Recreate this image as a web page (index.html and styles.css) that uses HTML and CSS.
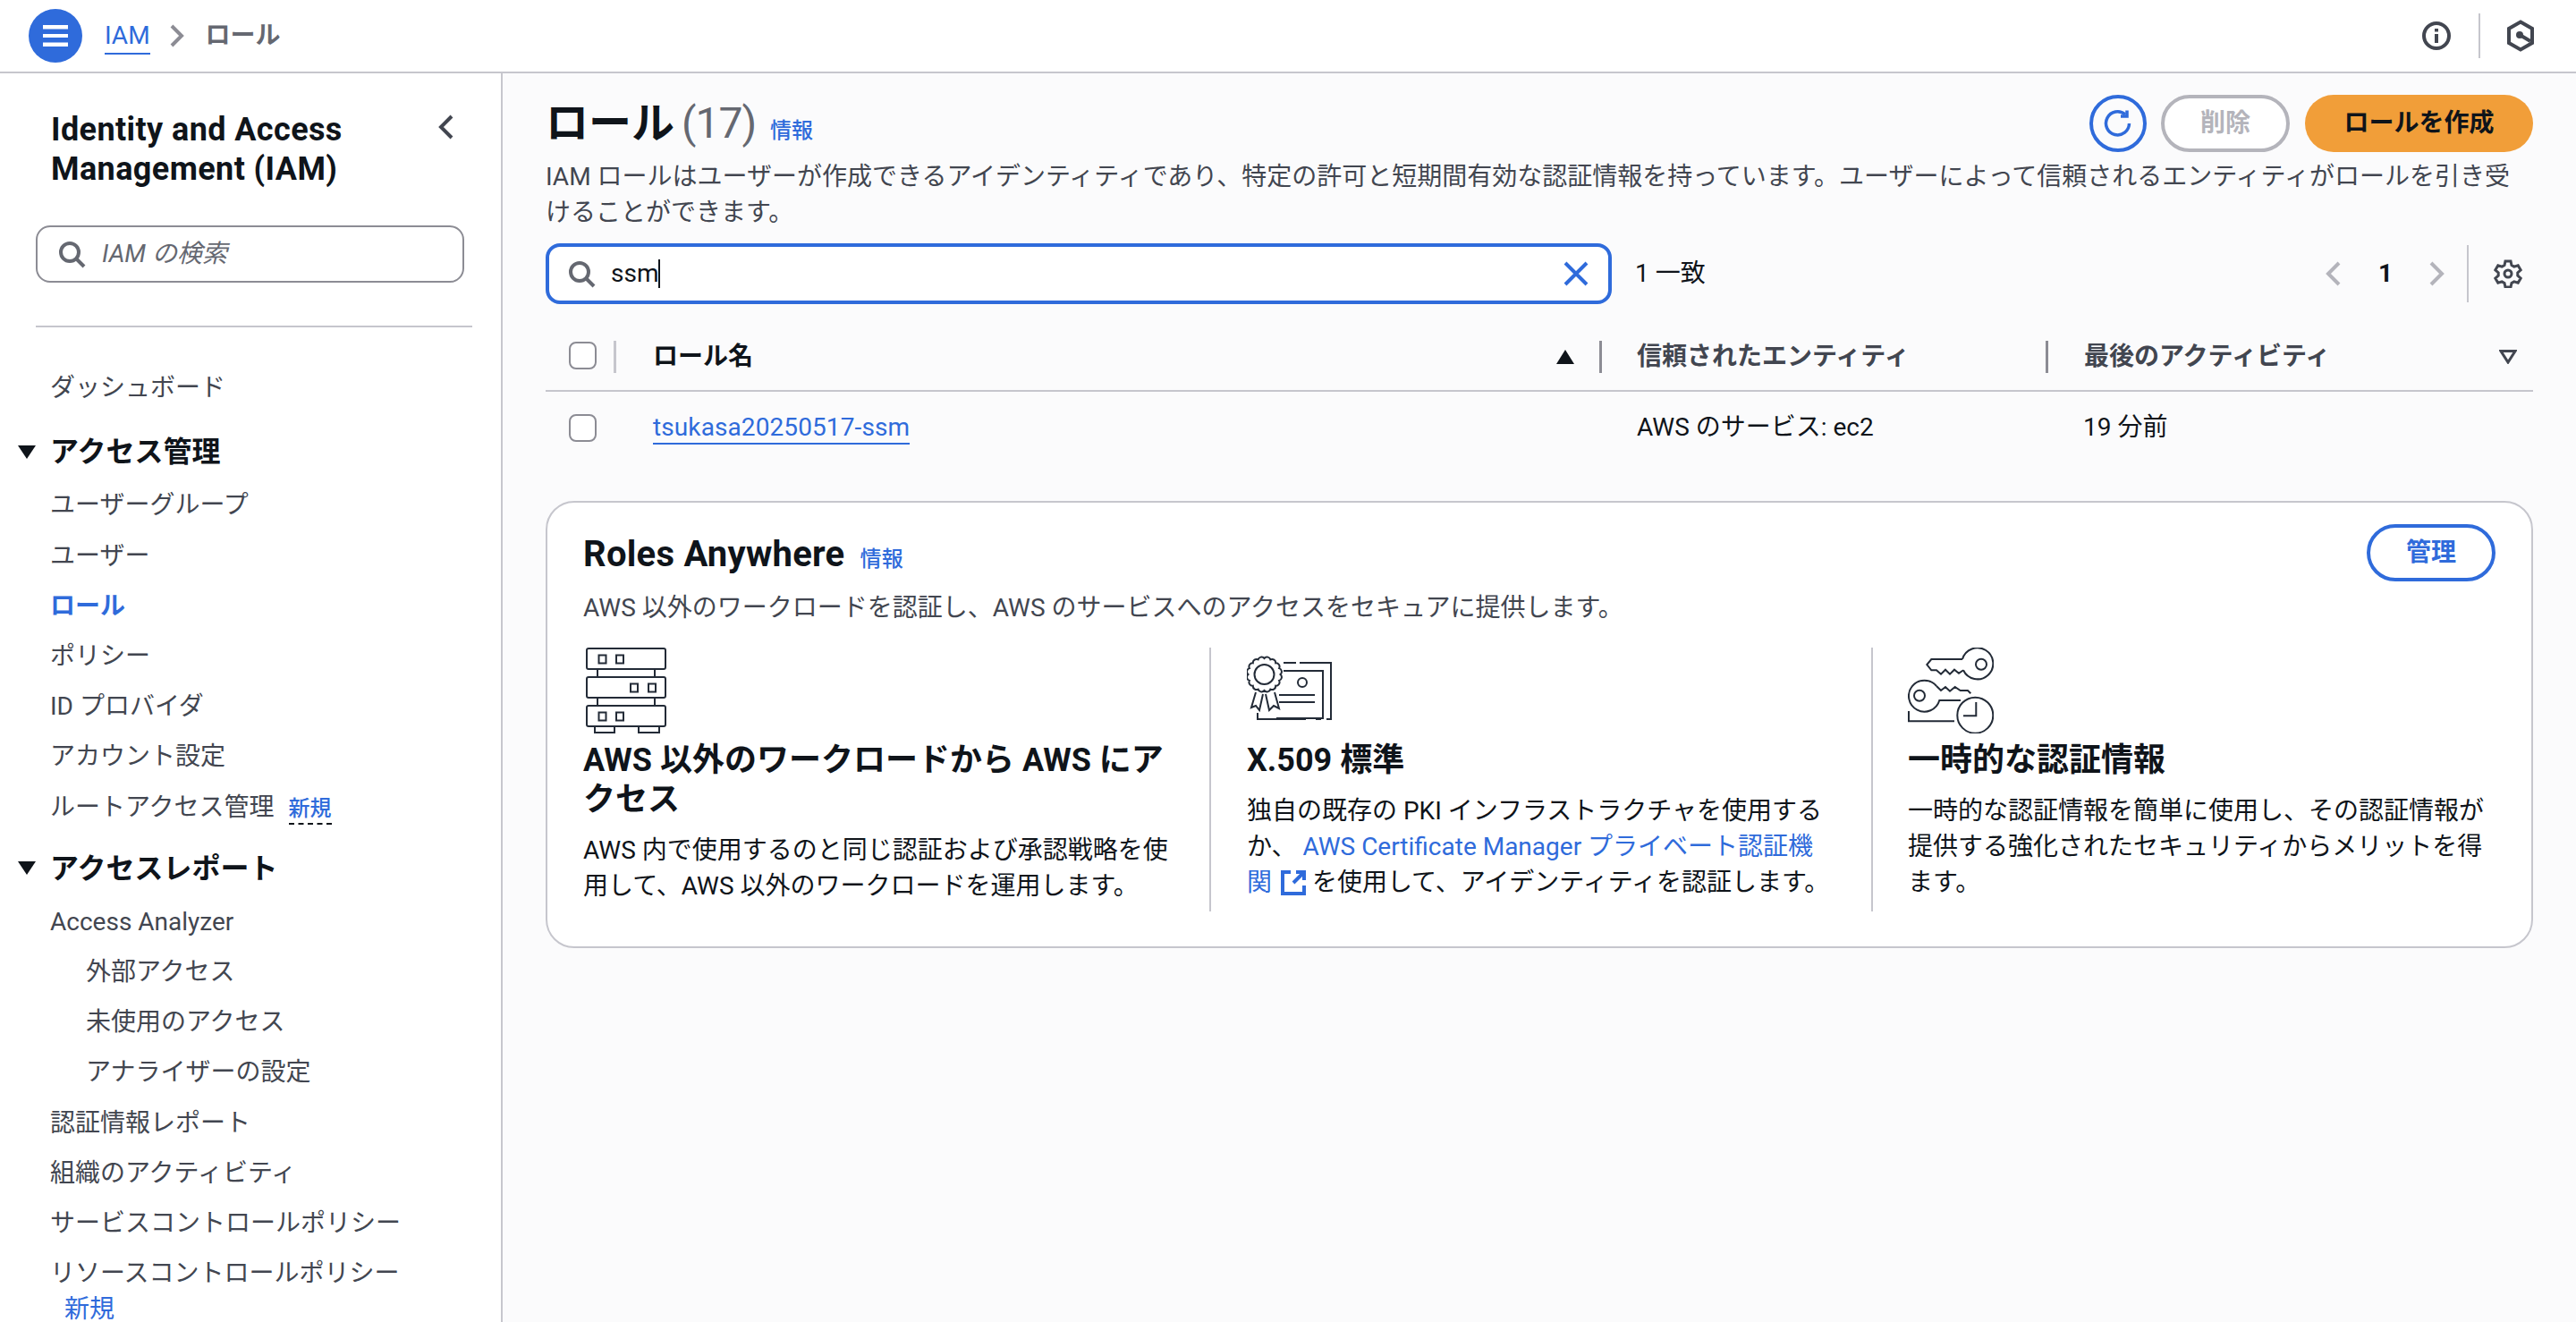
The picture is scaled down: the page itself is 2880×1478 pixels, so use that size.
FILE: index.html
```html
<!DOCTYPE html>
<html lang="ja">
<head>
<meta charset="utf-8">
<title>ロール | IAM</title>
<link rel="stylesheet" href="styles.css">
</head>
<body>
<header class="topbar">
  <button class="menu-btn" aria-label="menu">
    <svg width="28" height="24" viewBox="0 0 28 24"><rect y="0" width="28" height="4.5"/><rect y="10" width="28" height="4"/><rect y="19.5" width="28" height="4.5"/></svg>
  </button>
  <nav class="crumbs">
    <a class="crumb-link">IAM</a>
    <svg class="crumb-sep" width="16" height="26" viewBox="0 0 16 26"><path d="M2 2l11 11L2 24"/></svg>
    <span class="crumb-current">ロール</span>
  </nav>
  <div class="top-tools">
    <svg class="ico-dark" width="32" height="32" viewBox="0 0 32 32"><circle cx="16" cy="16" r="14"/><path d="M16 14v10M16 8v3.500"/></svg>
    <span class="top-sep"></span>
    <svg class="ico-dark" width="32" height="36" viewBox="0 0 32 36"><path d="M16 2.500 29 10v16l-13 7.500L3 26V10z"/><path d="M16 17.500 27 24"/><circle class="ico-fill" cx="15" cy="17" r="3"/></svg>
  </div>
</header>

<div class="layout">
  <aside class="sidenav">
    <div class="nav-head">
      <h2 class="nav-title">Identity and Access Management (IAM)</h2>
      <svg class="nav-collapse" width="18" height="28" viewBox="0 0 18 28"><path d="M15 2 3 14l12 12"/></svg>
    </div>
    <div class="nav-search">
      <svg class="ico-search" width="32" height="32" viewBox="0 0 32 32"><circle cx="14" cy="14" r="10"/><path d="M21 21l9 9"/></svg>
      <span class="nav-search-ph">IAM の検索</span>
    </div>
    <hr class="nav-rule">
    <ul class="nav-list">
      <li class="nav-item">ダッシュボード</li>
      <li class="nav-section"><svg width="20" height="15" viewBox="0 0 20 15"><path d="M0 0h20L10 15z"/></svg>アクセス管理</li>
      <li class="nav-item">ユーザーグループ</li>
      <li class="nav-item">ユーザー</li>
      <li class="nav-item nav-active">ロール</li>
      <li class="nav-item">ポリシー</li>
      <li class="nav-item">ID プロバイダ</li>
      <li class="nav-item">アカウント設定</li>
      <li class="nav-item">ルートアクセス管理<span class="nav-new">新規</span></li>
      <li class="nav-section nav-section-gap"><svg width="20" height="15" viewBox="0 0 20 15"><path d="M0 0h20L10 15z"/></svg>アクセスレポート</li>
      <li class="nav-item">Access Analyzer</li>
      <li class="nav-item nav-sub">外部アクセス</li>
      <li class="nav-item nav-sub">未使用のアクセス</li>
      <li class="nav-item nav-sub">アナライザーの設定</li>
      <li class="nav-item">認証情報レポート</li>
      <li class="nav-item">組織のアクティビティ</li>
      <li class="nav-item">サービスコントロールポリシー</li>
      <li class="nav-item nav-wrap">リソースコントロールポリシー<span class="nav-new-wrap">新規</span></li>
    </ul>
  </aside>

  <main class="content">
    <div class="page-head">
      <h1 class="page-title">ロール<span class="page-count">(17)</span><a class="info-link">情報</a></h1>
      <div class="actions">
        <button class="btn-round" aria-label="refresh">
          <svg width="32" height="32" viewBox="0 0 32 32"><path d="M28.500 16A13 13 0 1 1 24 6"/><path d="M26 1.500V8h-7"/></svg>
        </button>
        <button class="btn btn-disabled">削除</button>
        <button class="btn btn-primary">ロールを作成</button>
      </div>
    </div>
    <p class="page-desc">IAM ロールはユーザーが作成できるアイデンティティであり、特定の許可と短期間有効な認証情報を持っています。ユーザーによって信頼されるエンティティがロールを引き受けることができます。</p>

    <div class="filter-row">
      <div class="filter-box">
        <svg class="ico-search" width="32" height="32" viewBox="0 0 32 32"><circle cx="14" cy="14" r="10"/><path d="M21 21l9 9"/></svg>
        <span class="filter-value">ssm</span><span class="caret"></span>
        <svg class="filter-clear" width="28" height="28" viewBox="0 0 28 28"><path d="M2 2l24 24M26 2 2 26"/></svg>
      </div>
      <span class="filter-count">1 一致</span>
      <div class="pager">
        <svg class="pager-arrow" width="20" height="28" viewBox="0 0 20 28"><path d="M16 2 4 14l12 12"/></svg>
        <span class="pager-num">1</span>
        <svg class="pager-arrow" width="20" height="28" viewBox="0 0 20 28"><path d="M4 2l12 12L4 26"/></svg>
        <span class="pager-sep"></span>
        <svg class="ico-gear" width="32" height="32" viewBox="0 0 32 32"><path d="M13 2h6l1 4.500 2.800 1.600 4.400-1.400 3 5.200-3.400 3.100v3l3.400 3.100-3 5.200-4.400-1.400-2.800 1.600-1 4.500h-6l-1-4.500-2.800-1.600-4.400 1.400-3-5.200 3.400-3.100v-3L1.800 11.900l3-5.200 4.400 1.400L12 6.500z"/><circle cx="16" cy="16" r="4"/></svg>
      </div>
    </div>

    <div class="table-head">
      <div class="cell-check"><span class="checkbox"></span></div>
      <div class="th th-name th-light">ロール名<svg class="sort-up" width="20" height="16" viewBox="0 0 20 16"><path d="M10 0l10 16H0z"/></svg></div>
      <div class="th th-entity">信頼されたエンティティ</div>
      <div class="th th-activity">最後のアクティビティ<svg class="sort-down" width="20" height="16" viewBox="0 0 20 16"><path d="M2 1.500h16L10 14z"/></svg></div>
    </div>
    <div class="table-row">
      <div class="cell-check"><span class="checkbox"></span></div>
      <div class="td td-name"><a class="role-link">tsukasa20250517-ssm</a></div>
      <div class="td td-entity">AWS のサービス: ec2</div>
      <div class="td td-activity">19 分前</div>
    </div>

    <section class="card">
      <div class="card-head">
        <div>
          <h2 class="card-title">Roles Anywhere<a class="info-link info-link-card">情報</a></h2>
          <p class="card-desc">AWS 以外のワークロードを認証し、AWS のサービスへのアクセスをセキュアに提供します。</p>
        </div>
        <button class="btn btn-outline">管理</button>
      </div>
      <div class="card-cols">
        <div class="col">
          <svg class="col-icon" width="96" height="96" viewBox="0 0 96 96">
            <rect x="4" y="1" width="88" height="23" rx="2"/><rect x="4" y="33" width="88" height="23" rx="2"/><rect x="4" y="65" width="88" height="23" rx="2"/>
            <path d="M16 24v9M80 24v9M16 56v9M80 56v9M13 88v7h22v-7M62 88v7h23v-7"/>
            <rect x="17.500" y="8.500" width="8" height="9"/><rect x="37" y="8.500" width="8" height="9"/><rect x="53" y="40.500" width="8" height="9"/><rect x="73" y="40.500" width="8" height="9"/><rect x="17.500" y="72.500" width="8" height="9"/><rect x="37" y="72.500" width="8" height="9"/>
          </svg>
          <h3 class="col-title">AWS 以外のワークロードから AWS にアクセス</h3>
          <p class="col-text">AWS 内で使用するのと同じ認証および承認戦略を使用して、AWS 以外のワークロードを運用します。</p>
        </div>
        <div class="col col-mid">
          <svg class="col-icon" width="96" height="96" viewBox="0 0 96 96">
            <path d="M37.500 30A4 4 0 0 1 36.100 36.900A4 4 0 0 1 32.200 42.700A4 4 0 0 1 26.400 46.600A4 4 0 0 1 19.500 48A4 4 0 0 1 12.600 46.600A4 4 0 0 1 6.800 42.700A4 4 0 0 1 2.900 36.900A4 4 0 0 1 1.500 30A4 4 0 0 1 2.900 23.100A4 4 0 0 1 6.800 17.300A4 4 0 0 1 12.600 13.400A4 4 0 0 1 19.500 12A4 4 0 0 1 26.400 13.400A4 4 0 0 1 32.200 17.300A4 4 0 0 1 36.100 23.100A4 4 0 0 1 37.500 30Z"/>
            <circle cx="19.500" cy="30" r="11"/>
            <path d="M10 50 5 67l5-2 4 5 4-18M21 52l4 18 5-5 6 3-5-18"/>
            <path d="M41 17h14M59 17h35v63h-5M83 80h-6M66 80H12v-7M41 26h44v53H33"/>
            <circle cx="62" cy="39" r="5"/>
            <path d="M36 53h40M36 61h40"/>
          </svg>
          <h3 class="col-title">X.509 標準</h3>
          <p class="col-text col-text-x">独自の既存の PKI インフラストラクチャを使用するか、 <a class="text-link">AWS Certificate Manager プライベート認証機関<svg class="ext-icon" width="28" height="28" viewBox="0 0 28 28"><path d="M11 2H2v24h24v-9"/><path d="M17 2h9v9M26 2 14 14"/></svg></a> を使用して、アイデンティティを認証します。</p>
        </div>
        <div class="col col-last">
          <svg class="col-icon" width="96" height="96" viewBox="0 0 96 96">
            <path d="M61 13H26.300l-5 6 5 6.300H32l5 4.400 5-5 5 5 5-5 5 4 5-3.500"/>
            <path d="M61 13a17.500 17.500 0 1 1 1 12.300"/>
            <circle cx="82" cy="18.700" r="6"/>
            <path d="M32 43l5 5 5-4 5 4.700 5.700-4.700 6 4H67l3.300 3.300"/>
            <path d="M32 43a17.500 17.500 0 1 0 3.300 16H59"/>
            <circle cx="13" cy="53.700" r="6"/>
            <circle cx="75.300" cy="75.700" r="20"/>
            <path d="M76.300 61v15.300H62M1 71v11.300h51"/>
          </svg>
          <h3 class="col-title">一時的な認証情報</h3>
          <p class="col-text col-text-x">一時的な認証情報を簡単に使用し、その認証情報が提供する強化されたセキュリティからメリットを得ます。</p>
        </div>
      </div>
    </section>
  </main>
</div>
</body>
</html>
```

FILE: styles.css
```css
* { box-sizing: border-box; }
html, body { margin: 0; height: 100%; overflow: hidden; }
body {
  font-family: Roboto, "Noto Sans CJK JP", sans-serif;
  font-size: 28px;
  line-height: 40px;
  color: #0f141a;
  background: #fff;
}
h1, h2, h3, p, ul { margin: 0; padding: 0; }
ul { list-style: none; }
button { font: inherit; background: none; border: 0; padding: 0; }
svg { flex: none; display: block; }

.topbar {
  height: 82px;
  border-bottom: 2px solid #c6c6cd;
  display: flex;
  align-items: center;
  padding: 0 46px 0 32px;
}
.menu-btn {
  width: 60px; height: 60px; border-radius: 50%;
  background: #2f6bdb;
  display: flex; align-items: center; justify-content: center;
}
.menu-btn svg { fill: #fff; }
.crumbs { display: flex; align-items: center; margin-left: 25px; }
.crumb-link { color: #2f6bdb; border-bottom: 2px solid #2f6bdb; line-height: 38px; margin-top: 1px; }
.crumb-sep { margin: 0 24px 0 22px; fill: none; stroke: #8c8c94; stroke-width: 4; }
.crumb-current { color: #656871; font-weight: 700; }
.top-tools { margin-left: auto; display: flex; align-items: center; }
.ico-dark { fill: none; stroke: #424650; stroke-width: 4; }
.ico-fill { fill: #424650; stroke-width: 2; }
.top-sep { width: 2px; height: 50px; background: #c6c6cd; margin: 0 29px 0 31px; }

.layout { display: flex; height: calc(100% - 82px); }
.sidenav {
  width: 562px; flex: none;
  border-right: 2px solid #c6c6cd;
  padding: 41px 0 0;
  background: #fff;
  overflow: hidden;
}
.nav-head { display: flex; padding: 0 52px 0 57px; justify-content: space-between; }
.nav-title { font-size: 36px; line-height: 44px; font-weight: 700; width: 380px; letter-spacing: 0.4px; }
.nav-collapse { margin-top: 5px; fill: none; stroke: #424650; stroke-width: 4; }
.nav-search {
  margin: 41px 41px 0 40px;
  height: 64px;
  border: 2px solid #8c8c94;
  border-radius: 16px;
  display: flex; align-items: center;
  padding-left: 22px;
}
.ico-search { fill: none; stroke: #656871; stroke-width: 4; }
.nav-search-ph { margin-left: 18px; font-style: italic; color: #656871; }
.nav-rule { border: 0; height: 2px; background: #c6c6cd; margin: 48px 32px 0 40px; }
.nav-list { margin-top: 40px; }
.nav-item { padding: 8px 0 8.200px 56px; color: #424650; }
.nav-sub { padding-left: 96px; }
.nav-active { color: #2f6bdb; font-weight: 700; }
.nav-section {
  display: flex; align-items: center; gap: 16px;
  font-size: 32px; font-weight: 700; line-height: 40px;
  padding: 8px 0 12.200px 20px;
  margin-top: 15px;
}
.nav-section svg { fill: #0f141a; }
.nav-section-gap { margin-top: 12px; }
.nav-new {
  margin-left: 16px; font-size: 24px; font-weight: 500; color: #2f6bdb;
  border-bottom: 2px dashed #0f141a; line-height: 32px; display: inline-block;
}
.nav-new-wrap { display: block; margin-left: 16px; color: #2f6bdb; }

.content { flex: 1; background: #fbfbfc; padding: 0 48px; min-width: 0; }
.page-head { display: flex; justify-content: space-between; height: 96px; padding-top: 24px; }
.page-title { font-size: 48px; line-height: 64px; font-weight: 700; }
.page-count { font-weight: 400; color: #656871; margin-left: 8px; letter-spacing: -1px; }
.info-link { font-size: 24px; color: #2f6bdb; font-weight: 500; margin-left: 16px; }
.actions { display: flex; gap: 17px; }
.btn-round {
  width: 64px; height: 64px; border-radius: 50%; border: 4px solid #2f6bdb;
  display: flex; align-items: center; justify-content: center; margin-right: -1px;
}
.btn-round svg { fill: none; stroke: #2f6bdb; stroke-width: 3.500; }
.btn { height: 64px; border-radius: 32px; font-weight: 700; padding: 0; }
.btn-disabled { width: 144px; border: 4px solid #b4b4bb; color: #b4b4bb; background: #fff; }
.btn-primary { width: 255px; background: #f19e39; color: #0f141a; }
.page-desc { color: #424650; }

.filter-row { display: flex; align-items: center; margin-top: 14px; }
.filter-box {
  width: 1192px; height: 68px;
  border: 4px solid #2f6bdb; border-radius: 16px;
  background: #fff;
  display: flex; align-items: center;
  padding: 0 22px 0 20px;
}
.filter-value { margin-left: 17px; }
.caret { width: 2px; height: 32px; background: #0f141a; }
.filter-clear { margin-left: auto; fill: none; stroke: #2f6bdb; stroke-width: 4; }
.filter-count { margin-left: 26px; }
.pager { margin-left: auto; display: flex; align-items: center; margin-right: 12px; }
.pager-arrow { fill: none; stroke: #b4b4bb; stroke-width: 4; }
.pager-num { font-weight: 700; margin: 0 39px 0 40px; }
.pager-sep { width: 2px; height: 64px; background: #c6c6cd; margin: 0 28px 0 24px; }
.ico-gear { fill: none; stroke: #424650; stroke-width: 3; }

.table-head {
  display: grid; grid-template-columns: 76px 1102px 499px 1fr;
  align-items: center;
  height: 58px; margin-top: 40px;
  padding-bottom: 18px;
  border-bottom: 2px solid #c6c6cd;
}
.table-row {
  display: grid; grid-template-columns: 76px 1102px 499px 1fr;
  align-items: center;
  height: 80px;
}
.cell-check { padding-left: 26px; display: flex; }
.table-head .cell-check { margin-top: -3px; }
.checkbox { width: 31px; height: 31px; border: 2.500px solid #8c8c94; border-radius: 8px; background: #fff; }
.th {
  height: 36px; line-height: 36px;
  border-left: 3px solid #8c8c94;
  padding-left: 40px;
  font-weight: 700; color: #424650;
  display: flex; justify-content: space-between; align-items: center;
}
.th-light { border-left: 3px solid #c6c6cd; color: #0f141a; padding-right: 28px; padding-left: 41px; }
.th-entity { padding-left: 39px; }
.th-activity { padding-right: 18px; }
.sort-up { fill: #0f141a; }
.sort-down { fill: none; stroke: #424650; stroke-width: 3; }
.td { padding-left: 42px; }
.td-name { padding-left: 44px; }
.role-link { color: #2f6bdb; border-bottom: 2px solid #2f6bdb; padding-bottom: 1px; letter-spacing: 0.1px; }

.card {
  margin-top: 42px;
  height: 500px;
  background: #fff;
  border: 2px solid #c6c6cd; border-radius: 32px;
  padding: 24px 40px 0;
}
.card-head { display: flex; justify-content: space-between; align-items: flex-start; }
.card-title { font-size: 40px; line-height: 44px; font-weight: 700; padding-top: 12px; letter-spacing: 0.25px; }
.info-link-card { margin-left: 17px; }
.card-desc { color: #424650; margin-top: 13px; }
.card-cols { display: flex; margin-top: 24px; height: 295px; }
.col { width: 702px; padding-right: 40px; border-right: 2px solid #c6c6cd; }
.col-mid { width: 740px; padding-left: 40px; }
.col-last { width: 696px; padding: 0 0 0 39px; border-right: 0; }
.col-icon { fill: none; stroke: #232b37; stroke-width: 2; }
.col-title { font-size: 36px; line-height: 44px; font-weight: 700; margin-top: 8px; }
.col-text { margin-top: 15px; }
.text-link { color: #2f6bdb; }
.ext-icon { display: inline-block; vertical-align: -5px; margin-left: 10px; fill: none; stroke: #2f6bdb; stroke-width: 4; }
.btn-outline { border: 4px solid #2f6bdb; color: #2f6bdb; width: 144px; padding: 0; background: #fff; }
```
